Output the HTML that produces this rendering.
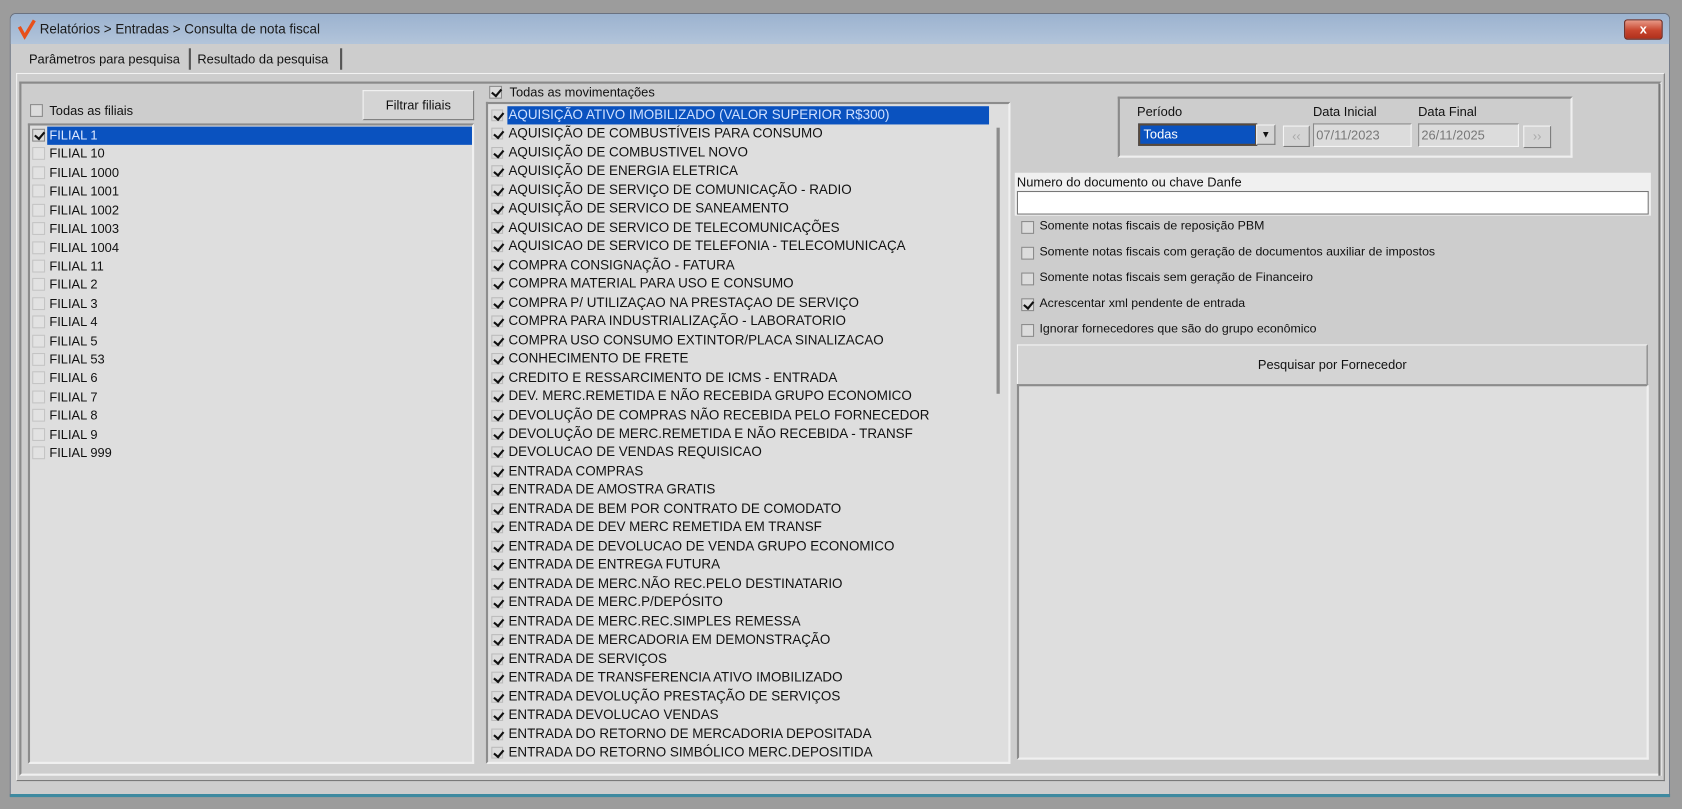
<!DOCTYPE html>
<html><head><meta charset="utf-8"><style>
*{box-sizing:border-box;margin:0;padding:0}
html,body{width:1682px;height:809px;overflow:hidden;background:#9c9c9c}
#s{position:absolute;left:0;top:0;width:1568px;height:754px;transform:scale(1.07270,1.07294);transform-origin:0 0;font-family:"Liberation Sans",sans-serif;font-size:12px;color:#111}
.a{position:absolute}
.win{left:9px;top:12px;width:1548px;height:731px;background:#cdcdcd;border:1px solid #6a7280;border-radius:6px 6px 0 0;border-bottom:3px solid #3e8aa0}
.title{left:10px;top:13px;width:1546px;height:28px;background:linear-gradient(#9cb3cf,#a9bdd6 60%,#b3c5da);border-radius:5px 5px 0 0}
.sunk{border:1px solid;border-color:#8a8a8a #f4f4f4 #f4f4f4 #8a8a8a}
.list{background:#dedede;border:2px solid;border-color:#8c8c8c #f0f0f0 #f0f0f0 #8c8c8c}
.row{position:absolute;left:2px;height:17px;line-height:17px;white-space:nowrap}
.cb{position:absolute;width:12px;height:12px;border:1px solid #8a8a8a;background:#dcdcdc}
.ck::after{content:"";position:absolute;left:3px;top:0px;width:4px;height:7px;border:solid #111;border-width:0 2px 2px 0;transform:rotate(40deg)}
.mid .row{font-size:12.5px;transform-origin:0 50%;}
.btn{background:#d4d4d4;border:1px solid;border-color:#f4f4f4 #7a7a7a #7a7a7a #f4f4f4;text-align:center}
</style></head><body><div id="s">
<div class="a win"></div>
<div class="a title"></div>
<svg class="a" style="left:16px;top:17px" width="18" height="20"><path d="M2 8 L7 17 L16 2" stroke="#e8501a" stroke-width="3.2" fill="none"/></svg>
<div class="a" style="left:37px;top:20px;font-size:12.5px;color:#1a1a1a">Relatórios &gt; Entradas &gt; Consulta de nota fiscal</div>
<div class="a" style="left:1514px;top:18px;width:36px;height:19px;background:linear-gradient(#e89a88,#c8452e 55%,#b0301c);border:1px solid #6e2a20;border-radius:3px;color:#fff;font-weight:bold;text-align:center;line-height:16px;font-size:12px">x</div>
<div class="a" style="left:27px;top:48px;font-size:12px">Parâmetros para pesquisa</div>
<div class="a" style="left:176px;top:45px;width:2px;height:20px;background:#555"></div>
<div class="a" style="left:184px;top:48px;font-size:12px">Resultado da pesquisa</div>
<div class="a" style="left:317px;top:45px;width:2px;height:20px;background:#555"></div>
<div class="a" style="left:15px;top:68px;width:1537px;height:660px;border:1px solid;border-color:#f2f2f2 #777 #777 #f2f2f2"></div>
<div class="a" style="left:18px;top:76px;width:1531px;height:647px;border:2px solid;border-color:#8a8a8a #f0f0f0 #f0f0f0 #8a8a8a"></div>
<div class="a cb" style="left:28px;top:97px"></div>
<div class="a" style="left:46px;top:96px">Todas as filiais</div>
<div class="a btn" style="left:338px;top:84px;width:104px;height:28px;line-height:26px">Filtrar filiais</div>
<div class="a list" style="left:26px;top:115px;width:416px;height:597px">
<div class="a" style="left:16px;top:1px;width:396px;height:17px;background:#0a52bf"></div>
<div id="L"></div>
</div>
<div class="a cb ck" style="left:456px;top:80px"></div>
<div class="a" style="left:475px;top:79px">Todas as movimentações</div>
<div class="a list mid" style="left:453px;top:95px;width:489px;height:617px">
<div class="a" style="left:18px;top:2px;width:449px;height:17px;background:#0a52bf"></div>
<div class="a" style="left:474px;top:22px;width:3px;height:248px;background:#8c8c8c"></div>
<div id="M"></div>
</div>
<div class="a" style="left:1042px;top:90px;width:424px;height:57px;border:2px solid;border-color:#8a8a8a #efefef #efefef #8a8a8a"></div>
<div class="a" style="left:1060px;top:97px">Período</div>
<div class="a" style="left:1061px;top:115px;width:111px;height:21px;background:#0a52bf;border:2px solid #5a4a3a;color:#fff;padding-left:3px;line-height:17px">Todas</div>
<div class="a btn" style="left:1171px;top:116px;width:18px;height:19px;font-size:9px;line-height:17px">▼</div>
<div class="a btn" style="left:1196px;top:117px;width:25px;height:20px;color:#aaa;line-height:18px">‹‹</div>
<div class="a" style="left:1224px;top:97px">Data Inicial</div>
<div class="a sunk" style="left:1224px;top:115px;width:92px;height:22px;background:#dcdcdc;color:#777;line-height:20px;padding-left:2px">07/11/2023</div>
<div class="a" style="left:1322px;top:97px">Data Final</div>
<div class="a sunk" style="left:1322px;top:115px;width:94px;height:22px;background:#dcdcdc;color:#777;line-height:20px;padding-left:2px">26/11/2025</div>
<div class="a btn" style="left:1420px;top:117px;width:26px;height:21px;color:#aaa;line-height:18px">››</div>
<div class="a" style="left:946px;top:161px;width:593px;height:40px;background:#f0f0f0"></div>
<div class="a" style="left:948px;top:163px">Numero do documento ou chave Danfe</div>
<div class="a" style="left:948px;top:178px;width:589px;height:22px;background:#fff;border:1px solid #777"></div>
<div id="R"></div>
<div class="a btn" style="left:948px;top:321px;width:588px;height:38px;line-height:36px">Pesquisar por Fornecedor</div>
<div class="a list" style="left:948px;top:358px;width:589px;height:350px"></div>
<div class="a" style="left:1546px;top:78px;width:2px;height:645px;background:#777"></div>
</div>
<script>
var L=["FILIAL 1","FILIAL 10","FILIAL 1000","FILIAL 1001","FILIAL 1002","FILIAL 1003","FILIAL 1004","FILIAL 11","FILIAL 2","FILIAL 3","FILIAL 4","FILIAL 5","FILIAL 53","FILIAL 6","FILIAL 7","FILIAL 8","FILIAL 9","FILIAL 999"];
var h="";L.forEach(function(t,i){var y=1+i*17.42;h+='<div class="cb'+(i==0?' ck':'')+'" style="left:2px;top:'+(y+2)+'px;'+(i==0?'':'border-color:#c4c4c4;background:#e2e2e2')+'"></div><div class="row" style="left:18px;top:'+y+'px;'+(i==0?'color:#dfe9ff':'')+'">'+t+'</div>';});
document.getElementById("L").innerHTML=h;
var M=["AQUISIÇÃO ATIVO IMOBILIZADO (VALOR SUPERIOR R$300)","AQUISIÇÃO DE COMBUSTÍVEIS PARA CONSUMO","AQUISIÇÃO DE COMBUSTIVEL NOVO","AQUISIÇÃO DE ENERGIA ELETRICA","AQUISIÇÃO DE SERVIÇO DE COMUNICAÇÃO - RADIO","AQUISIÇÃO DE SERVICO DE SANEAMENTO","AQUISICAO DE SERVICO DE TELECOMUNICAÇÕES","AQUISICAO DE SERVICO DE TELEFONIA - TELECOMUNICAÇA","COMPRA CONSIGNAÇÃO - FATURA","COMPRA MATERIAL PARA USO E CONSUMO","COMPRA P/ UTILIZAÇAO NA PRESTAÇAO DE SERVIÇO","COMPRA PARA INDUSTRIALIZAÇÃO - LABORATORIO","COMPRA USO CONSUMO EXTINTOR/PLACA SINALIZACAO","CONHECIMENTO DE FRETE","CREDITO E RESSARCIMENTO DE ICMS - ENTRADA","DEV. MERC.REMETIDA E NÃO RECEBIDA GRUPO ECONOMICO","DEVOLUÇÃO DE COMPRAS NÃO RECEBIDA PELO FORNECEDOR","DEVOLUÇÃO DE MERC.REMETIDA E NÃO RECEBIDA - TRANSF","DEVOLUCAO DE VENDAS REQUISICAO","ENTRADA COMPRAS","ENTRADA DE AMOSTRA GRATIS","ENTRADA DE BEM POR CONTRATO DE COMODATO","ENTRADA DE DEV MERC REMETIDA EM TRANSF","ENTRADA DE DEVOLUCAO DE VENDA GRUPO ECONOMICO","ENTRADA DE ENTREGA FUTURA","ENTRADA DE MERC.NÃO REC.PELO DESTINATARIO","ENTRADA DE MERC.P/DEPÓSITO","ENTRADA DE MERC.REC.SIMPLES REMESSA","ENTRADA DE MERCADORIA EM DEMONSTRAÇÃO","ENTRADA DE SERVIÇOS","ENTRADA DE TRANSFERENCIA ATIVO IMOBILIZADO","ENTRADA DEVOLUÇÃO PRESTAÇÃO DE SERVIÇOS","ENTRADA DEVOLUCAO VENDAS","ENTRADA DO RETORNO DE MERCADORIA DEPOSITADA","ENTRADA DO RETORNO SIMBÓLICO MERC.DEPOSITIDA"];
h="";M.forEach(function(t,i){var y=2+i*17.47;h+='<div class="cb ck" style="left:3px;top:'+(y+3)+'px;width:11px;height:11px;border-color:#bbb"></div><div class="row" style="left:19px;top:'+y+'px;'+(i==0?'color:#cfe0ff':'')+'">'+t+'</div>';});
document.getElementById("M").innerHTML=h;
var R=[["Somente notas fiscais de reposição PBM",0],["Somente notas fiscais com geração de documentos auxiliar de impostos",0],["Somente notas fiscais sem geração de Financeiro",0],["Acrescentar xml pendente de entrada",1],["Ignorar fornecedores que são do grupo econômico",0]];
h="";R.forEach(function(r,i){var y=205+i*24;h+='<div class="a cb'+(r[1]?' ck':'')+'" style="left:952px;top:'+(y+1)+'px"></div><div class="a" style="left:969px;top:'+y+'px;font-size:11.5px">'+r[0]+'</div>';});
document.getElementById("R").innerHTML=h;
</script>
</body></html>
